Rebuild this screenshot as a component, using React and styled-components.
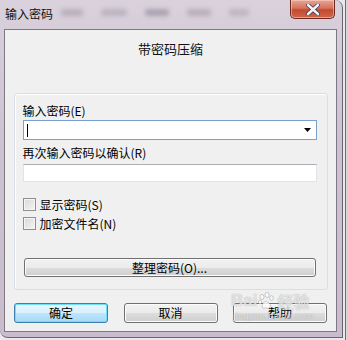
import React from 'react'
import styled, { createGlobalStyle } from 'styled-components'

const GlobalStyle = createGlobalStyle`
  html, body {
    margin: 0;
    padding: 0;
    background: #dcdbe0;
  }
  body {
    font-family: "Noto Sans CJK SC", "Liberation Sans", sans-serif;
    font-size: 12px;
    color: #000;
  }
`

const Screen = styled.div`
  width: 347px;
  height: 340px;
  overflow: hidden;
  position: relative;
  background: linear-gradient(90deg, #e9e8ec 0, #e9e8ec 345px, #6e6e72 345px, #6e6e72 346px, #d9d9dd 346px);
`

const Window = styled.div`
  width: 343px;
  height: 338px;
  box-sizing: border-box;
  border-right: 1px solid #6a6470;
  border-bottom: 1px solid #6a6470;
  border-radius: 0 8px 0 8px;
  background: linear-gradient(180deg, #d9d1dc 0%, #cdc2d2 40%, #c8bccd 100%);
  display: flex;
  flex-direction: column;
`

const TitleBar = styled.div`
  height: 29px;
  display: flex;
  align-items: flex-start;
  padding-left: 5px;
`

const Title = styled.div`
  margin-top: 6px;
  font-size: 12px;
  line-height: 16px;
  color: #111;
`

const Ghosts = styled.div`
  flex: 1;
  display: flex;
  gap: 18px;
  margin: 9px 0 0 8px;
  filter: blur(2px);
`

const Ghost = styled.span`
  width: ${p => p.w}px;
  height: 7px;
  background: rgba(90, 80, 100, ${p => p.o});
  border-radius: 3px;
`

const CloseButton = styled.div`
  width: 45px;
  height: 19px;
  margin-right: 7px;
  box-sizing: border-box;
  border: 1px solid #6b2b22;
  border-top: none;
  border-radius: 0 0 5px 5px;
  background: linear-gradient(180deg, #e8a594 0%, #d6735e 45%, #c24a2f 55%, #d0664a 100%);
  box-shadow: inset 0 0 0 1px rgba(255, 220, 210, 0.5);
  display: flex;
  align-items: center;
  justify-content: center;
`

const Client = styled.div`
  margin-left: 4px;
  width: 333px;
  height: 303px;
  box-sizing: border-box;
  border: 1px solid #7d7882;
  background: #f0f0f0;
  display: flex;
  flex-direction: column;
  align-items: center;
  position: relative;
`

const Heading = styled.div`
  margin-top: 11px;
  font-size: 13px;
  line-height: 16px;
  color: #111;
`

const Group = styled.div`
  margin-top: 36px;
  width: 314px;
  box-sizing: border-box;
  border: 1px solid #d5dfe5;
  border-radius: 3px;
  box-shadow: inset 1px 1px 0 #fff;
  padding: 9px 10px 12px 8px;
  display: flex;
  flex-direction: column;
`

const Label = styled.div`
  line-height: 16px;
  font-size: 12px;
  margin-top: ${p => p.top || 0}px;
`

const Combo = styled.div`
  margin-top: 1px;
  height: 20px;
  box-sizing: border-box;
  border: 1px solid #7ba2cf;
  background: #fff;
  display: flex;
  align-items: center;
  justify-content: space-between;
  padding: 0 5px 0 3px;
`

const Caret = styled.span`
  width: 1px;
  height: 13px;
  background: #000;
`

const TextField = styled.div`
  margin-top: 3px;
  height: 18px;
  box-sizing: border-box;
  border: 1px solid #e2e3ea;
  border-top-color: #abadb3;
  background: #fff;
`

const CheckRow = styled.label`
  display: flex;
  align-items: center;
  gap: 4px;
  height: 16px;
  margin-top: ${p => p.top}px;
  font-size: 12px;
`

const Box = styled.span`
  width: 13px;
  height: 13px;
  box-sizing: border-box;
  border: 1px solid #8f8f8f;
  background: linear-gradient(135deg, #d8d8d8 0%, #f4f4f4 100%);
  box-shadow: inset 0 0 0 1px #f5f5f5;
`

const Button = styled.div`
  height: ${p => p.h || 20}px;
  width: ${p => (p.w ? `${p.w}px` : 'auto')};
  box-sizing: border-box;
  border: 1px solid ${p => (p.primary ? '#3c7fb1' : '#707070')};
  border-radius: 3px;
  background: ${p =>
    p.primary
      ? 'linear-gradient(180deg, #eaf6fd 0%, #d9f0fc 50%, #bee6fd 51%, #a7d9f5 100%)'
      : 'linear-gradient(180deg, #f2f2f2 0%, #ebebeb 50%, #dddddd 51%, #cfcfcf 100%)'};
  box-shadow: inset 0 0 0 1px ${p => (p.primary ? '#6ce0f7' : '#fcfcfc')};
  display: flex;
  align-items: center;
  justify-content: center;
  font-size: 12px;
  line-height: 14px;
`

const WideButton = styled(Button)`
  margin-top: 27px;
  margin-left: 1px;
  margin-right: 1px;
`

const Actions = styled.div`
  margin-top: 13px;
  width: 313px;
  display: flex;
  justify-content: space-between;
`

const Watermark = styled.div`
  position: absolute;
  left: 226px;
  top: 261px;
  color: rgba(255, 255, 255, 0.7);
  text-shadow: 0 0 1px rgba(80, 80, 80, 0.55);
  pointer-events: none;
  display: flex;
  flex-direction: column;
  align-items: flex-start;
`

const MarkTop = styled.div`
  display: flex;
  align-items: center;
  font-family: "Liberation Sans", sans-serif;
  font-weight: bold;
  font-size: 17px;
  line-height: 20px;
`

const MarkCn = styled.span`
  font-family: "Noto Sans CJK SC", sans-serif;
  font-size: 16px;
  margin-left: 2px;
`

const MarkUrl = styled.div`
  font-family: "Liberation Sans", sans-serif;
  font-size: 9px;
  line-height: 11px;
  letter-spacing: 0.5px;
  margin-left: 2px;
`

function Paw() {
  return (
    <svg width="16" height="18" viewBox="0 0 16 18" style={{ margin: '0 1px' }}>
      <g fill="rgba(255,255,255,0.8)" stroke="rgba(90,90,90,0.5)" strokeWidth="0.6">
        <ellipse cx="4" cy="5" rx="2" ry="2.6" />
        <ellipse cx="9" cy="3" rx="2" ry="2.6" />
        <ellipse cx="13.5" cy="6" rx="1.8" ry="2.3" />
        <ellipse cx="2" cy="10" rx="1.6" ry="2" />
        <path d="M4 15 C4 10 8 8 11 11 C14 14 12 17 8 16 C6 15.5 5 17 4 15 Z" />
      </g>
    </svg>
  )
}

export default function App() {
  return (
    <>
      <GlobalStyle />
      <Screen>
        <Window>
          <TitleBar>
            <Title>输入密码</Title>
            <Ghosts>
              <Ghost w={22} o={0.25} />
              <Ghost w={26} o={0.22} />
              <Ghost w={24} o={0.35} />
              <Ghost w={24} o={0.25} />
              <Ghost w={20} o={0.2} />
            </Ghosts>
            <CloseButton>
              <svg width="14" height="11" viewBox="0 0 14 11">
                <path
                  d="M2 1 L12 10 M12 1 L2 10"
                  stroke="#3a3a4a"
                  strokeWidth="4"
                  strokeLinecap="round"
                />
                <path
                  d="M2 1 L12 10 M12 1 L2 10"
                  stroke="#f4f4f8"
                  strokeWidth="2.4"
                  strokeLinecap="round"
                />
              </svg>
            </CloseButton>
          </TitleBar>
          <Client>
            <Heading>带密码压缩</Heading>
            <Group>
              <Label>输入密码(E)</Label>
              <Combo>
                <Caret />
                <svg width="7" height="4" viewBox="0 0 7 4">
                  <path d="M0 0 H7 L3.5 4 Z" fill="#000" />
                </svg>
              </Combo>
              <Label top={5}>再次输入密码以确认(R)</Label>
              <TextField />
              <CheckRow top={14}>
                <Box />
                显示密码(S)
              </CheckRow>
              <CheckRow top={3}>
                <Box />
                加密文件名(N)
              </CheckRow>
              <WideButton h={19}>整理密码(O)...</WideButton>
            </Group>
            <Actions>
              <Button primary w={94}>确定</Button>
              <Button w={94}>取消</Button>
              <Button w={94}>帮助</Button>
            </Actions>
            <Watermark>
              <MarkTop>
                Bai
                <Paw />
                <MarkCn>经验</MarkCn>
              </MarkTop>
              <MarkUrl>jingyan.baidu.com</MarkUrl>
            </Watermark>
          </Client>
        </Window>
      </Screen>
    </>
  )
}
